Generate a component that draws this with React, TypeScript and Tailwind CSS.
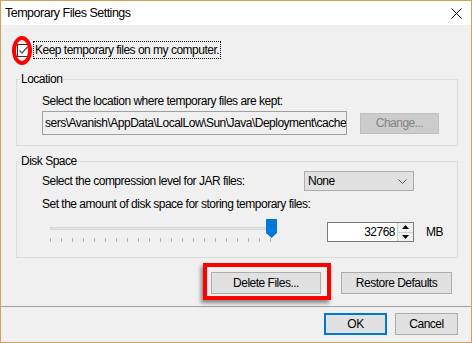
import React from "react";

const ticks = Array.from({ length: 21 }, (_, i) => i);

function GroupLabel({ children }: { children: React.ReactNode }) {
  return (
    <span className="absolute left-[3px] top-[-9px] bg-[#f0f0f0] px-[1px] leading-[16px]">{children}</span>
  );
}

export default function App() {
  return (
    <div className="relative flex h-[343px] w-[472px] flex-col border border-[#d2a356] bg-[#f0f0f0] font-['Liberation_Sans',Arial,sans-serif] text-[12px] leading-[16px] tracking-[-0.5px] text-black">
      {/* title bar */}
      <div className="flex h-[24px] shrink-0 items-center justify-between bg-white pl-[4px] pr-[9px]">
        <span className="text-[12.5px]">Temporary Files Settings</span>
        <svg width="11" height="11" viewBox="0 0 11 11">
          <path d="M0.5 0.5 L10.5 10.5 M10.5 0.5 L0.5 10.5" stroke="#000" strokeWidth="1" />
        </svg>
      </div>

      {/* checkbox row */}
      <div className="mt-[17px] flex h-[16px] items-center">
        <div className="ml-[16px] flex h-[13px] w-[13px] items-center justify-center border border-[#333333] bg-white">
          <svg width="11" height="11" viewBox="0 0 11 11">
            <path d="M1.5 5.5 L4 8 L9.5 2" fill="none" stroke="#555" strokeWidth="1.3" />
          </svg>
        </div>
        <span className="ml-[3px] border border-dotted border-black px-[1px]">Keep temporary files on my computer.</span>
      </div>

      {/* Location group */}
      <div className="relative ml-[15px] mt-[21px] h-[67px] w-[442px] border border-[#dcdcdc] pl-[25px] pt-[13px]">
        <GroupLabel>Location</GroupLabel>
        <div>Select the location where temporary files are kept:</div>
        <div className="mt-[2px] flex items-center">
          <div className="flex h-[24px] w-[305px] items-center overflow-hidden whitespace-nowrap border border-[#a0a0a0] bg-[#f0f0f0] pl-[2px]">
            sers\Avanish\AppData\LocalLow\Sun\Java\Deployment\cache
          </div>
          <div className="ml-[13px] flex h-[21px] w-[79px] items-center justify-center border border-[#bfbfbf] bg-[#cccccc] text-[#838383]">
            Change...
          </div>
        </div>
      </div>

      {/* Disk Space group */}
      <div className="relative ml-[15px] mt-[15px] h-[97px] w-[442px] border border-[#dcdcdc] pl-[25px] pt-[9px]">
        <GroupLabel>Disk Space</GroupLabel>
        <div className="flex h-[20px] items-center">
          <span className="w-[262px]">Select the compression level for JAR files:</span>
          <div className="flex h-[20px] w-[110px] items-center justify-between border border-[#adadad] bg-[#e1e1e1] pl-[3px] pr-[6px]">
            <span>None</span>
            <svg width="9" height="5" viewBox="0 0 9 5">
              <path d="M0.5 0.5 L4.5 4.5 L8.5 0.5" fill="none" stroke="#555" strokeWidth="1" />
            </svg>
          </div>
        </div>
        <div className="mt-[5px]">Set the amount of disk space for storing temporary files:</div>
        <div className="mt-[7px] flex items-start">
          <svg width="236" height="24" viewBox="0 0 236 24" className="ml-[4px] block">
            <rect x="4.5" y="8.5" width="226" height="2" fill="#e7e7e7" stroke="#d6d6d6" />
            {ticks.map((i) => (
              <line key={i} x1={4.5 + i * 11} y1="19" x2={4.5 + i * 11} y2="23" stroke="#b4b4b4" strokeWidth="1" />
            ))}
            <path d="M220 0 H231 V14 L225.5 19 L220 14 Z" fill="#0078d7" />
          </svg>
          <div className="ml-[45px] mt-[3px] flex h-[20px] w-[87px] border border-[#7a7a7a] bg-white">
            <div className="flex flex-1 items-center justify-end pr-[2px]">32768</div>
            <div className="flex w-[16px] flex-col border-l border-[#d0d0d0]">
              <div className="flex flex-1 items-center justify-center border-b border-[#d0d0d0] bg-[#f0f0f0]">
                <svg width="7" height="4" viewBox="0 0 7 4"><path d="M0 4 L3.5 0 L7 4 Z" fill="#000" /></svg>
              </div>
              <div className="flex flex-1 items-center justify-center bg-[#f0f0f0]">
                <svg width="7" height="4" viewBox="0 0 7 4"><path d="M0 0 L3.5 4 L7 0 Z" fill="#000" /></svg>
              </div>
            </div>
          </div>
          <span className="ml-[12px] mt-[5px]">MB</span>
        </div>
      </div>

      {/* action buttons */}
      <div className="mt-[14px] flex justify-end gap-[20px] pr-[19px]">
        <div className="flex h-[22px] w-[110px] items-center justify-center border border-[#adadad] bg-[#e1e1e1]">Delete Files...</div>
        <div className="flex h-[22px] w-[111px] items-center justify-center border border-[#adadad] bg-[#e1e1e1]">Restore Defaults</div>
      </div>

      <div className="mt-[12px] h-[1px] bg-[#a0a0a0]" />

      <div className="mt-[6px] flex justify-end gap-[8px] pr-[13px]">
        <div className="flex h-[22px] w-[63px] items-center justify-center border-2 border-[#0078d7] bg-[#e1e1e1]">OK</div>
        <div className="flex h-[22px] w-[63px] items-center justify-center border border-[#adadad] bg-[#e1e1e1]">Cancel</div>
      </div>

      {/* annotations */}
      <div className="absolute left-[11px] top-[35px] h-[29px] w-[20px] rounded-[50%] border-[4px] border-[#ff0000]" />
      <div className="absolute left-[202px] top-[262px] h-[37px] w-[128px] border-[4px] border-[#ff0000] shadow-[-2px_3px_4px_rgba(0,0,0,0.45)]" />
    </div>
  );
}
